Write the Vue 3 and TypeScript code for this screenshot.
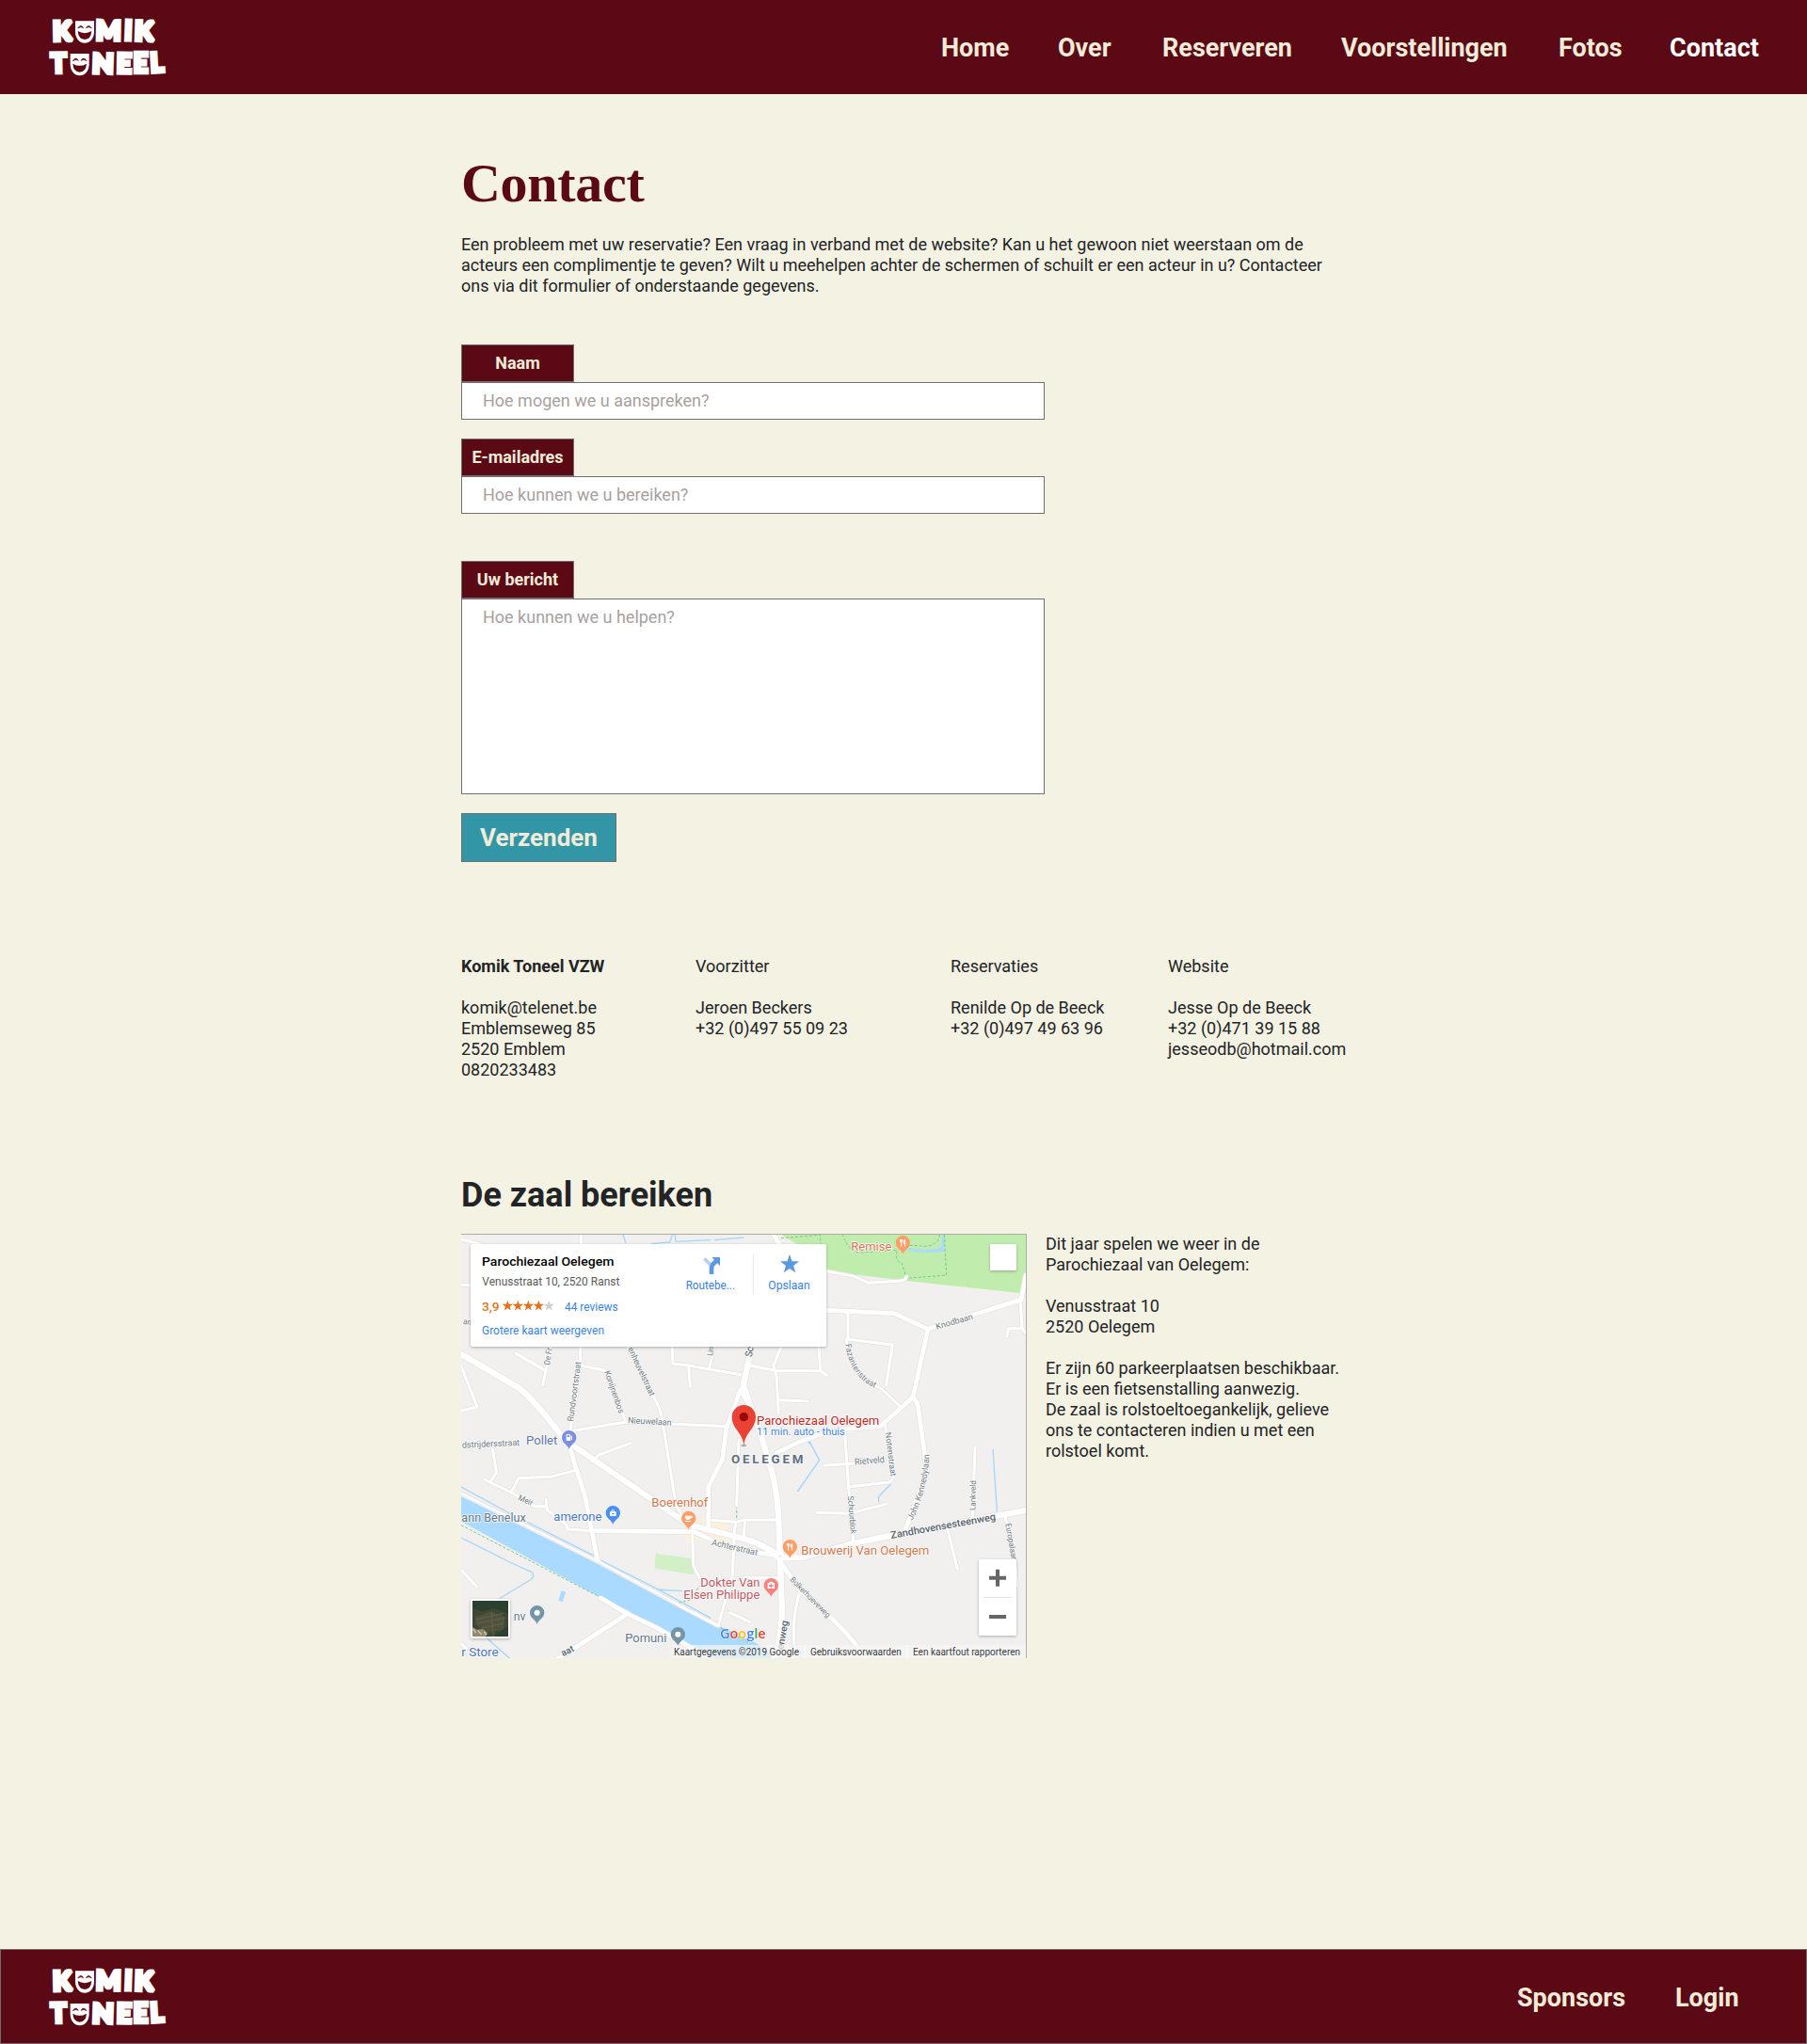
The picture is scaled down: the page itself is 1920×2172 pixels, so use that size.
<script setup lang="ts">
import { h } from 'vue'

interface NavItem { label: string; width: number; active?: boolean }
interface Contact { title: string; strong?: boolean; width: number; lines: string[] }
interface Label { t: string; a: [number, number]; b: [number, number]; s: number; c?: string; w?: number }
interface Pin { x: number; y: number; c: string; icon: string }

const nav: NavItem[] = [
  { label: 'Home', width: 124 },
  { label: 'Over', width: 111 },
  { label: 'Reserveren', width: 190 },
  { label: 'Voorstellingen', width: 231 },
  { label: 'Fotos', width: 118 },
  { label: 'Contact', width: 146, active: true },
]
const footerNav: NavItem[] = [
  { label: 'Sponsors', width: 168 },
  { label: 'Login', width: 139 },
]
const contacts: Contact[] = [
  { title: 'Komik Toneel VZW', strong: true, width: 249, lines: ['komik@telenet.be', 'Emblemseweg 85', '2520 Emblem', '0820233483'] },
  { title: 'Voorzitter', width: 271, lines: ['Jeroen Beckers', '+32 (0)497 55 09 23'] },
  { title: 'Reservaties', width: 231, lines: ['Renilde Op de Beeck', '+32 (0)497 49 63 96'] },
  { title: 'Website', width: 200, lines: ['Jesse Op de Beeck', '+32 (0)471 39 15 88', 'jesseodb@hotmail.com'] },
]

const logoLetters = [
  { t: 'K', x: 164, y: 136, w: 70, r: -1 },
  { t: 'M', x: 300, y: 133, w: 90, r: 1 },
  { t: 'I', x: 391, y: 133, w: 34, r: 2 },
  { t: 'K', x: 423, y: 134, w: 70, r: 2 },
  { t: 'T', x: 158, y: 238, w: 59, r: -1 },
  { t: 'N', x: 288, y: 238, w: 78, r: 2 },
  { t: 'E', x: 366, y: 238, w: 57, r: 1 },
  { t: 'E', x: 420, y: 238, w: 56, r: 0 },
  { t: 'L', x: 476, y: 236, w: 52, r: -3 },
]
const masks = [{ x: 270, y: 67 }, { x: 254, y: 171 }]

/* Wordmark with a laughing mask in place of each letter O. */
const KomikLogo = () =>
  h('svg', { viewBox: '0 0 720 300', width: 240, height: 100, role: 'img', 'aria-label': 'Komik Toneel' }, [
    ...logoLetters.map((l) =>
      h('text', {
        transform: `translate(${l.x + 5} ${l.y - 6}) rotate(${l.r})`,
        textLength: l.w - 10,
        lengthAdjust: 'spacingAndGlyphs',
        'font-family': 'Lato, sans-serif',
        'font-weight': 900,
        'font-size': 85,
        fill: '#fff',
        stroke: '#fff',
        'stroke-width': 13,
        'stroke-miterlimit': 2,
      }, l.t)),
    ...masks.map((m) =>
      h('g', { transform: `translate(${m.x} ${m.y})` }, [
        h('path', { d: 'M-30 0H30V34C30 56 16 70 0 70S-30 56 -30 34Z', fill: '#fff' }),
        h('path', { d: 'M-22 23Q-13 8 -4 22Q-13 16 -22 23ZM22 23Q13 8 4 22Q13 16 22 23Z', fill: '#5b0a15', stroke: '#5b0a15', 'stroke-width': 2 }),
        h('path', { d: 'M-22 32Q0 45 22 32Q20 58 0 59Q-20 58 -22 32Z', fill: '#5b0a15' }),
      ])),
  ])

const minorRoads: string[] = [
  'M15 36L80 52', 'M397 18V60', 'M15 180L45 183',
  'M15 440L66 570L15 582',
  'M190 400L285 455', 'M302 380L275 500',
  'M395 380V440L362 650', 'M395 438L470 453L530 592L540 618',
  'M365 647L540 618L865 632',
  'M545 378L630 540Q650 575 655 605L700 885L735 940',
  'M688 378L690 432L740 438L745 505', 'M740 438L805 450L905 467', 'M822 378L805 450',
  'M1035 378L1010 440L1020 470L1027 590', 'M1027 548L1120 552',
  'M925 435L1020 455H1160L1182 470', 'M1155 378L1160 455',
  'M1180 137L1265 153L1315 175L1415 168Q1432 166 1435 155',
  'M1248 262V355L1390 372L1370 500', 'M1243 355Q1250 470 1355 512L1415 570',
  'M1365 620L1395 793Q1390 803 1380 810L1250 825',
  'M1237 640L1250 825L1265 1000',
  'M1173 757L1265 750L1365 740', 'M1148 907L1250 910L1370 880',
  'M1653 700L1645 925', 'M1750 925L1780 1055L1787 1140', 'M1565 960L1597 1087',
  'M1095 1155Q1065 1250 1080 1380',
  'M900 675L893 885', 'M893 937L920 930H1022', 'M920 932L915 990', 'M915 1115H1030',
  'M803 930L890 937L886 970', 'M885 990L880 1105L835 1265', 'M870 1225L935 1255',
  'M15 1090L65 1143', 'M15 1325L30 1340',
  'M115 705L128 780L110 805', 'M90 802L175 843L250 887H285', 'M175 843L198 797L300 793L375 773',
  'M285 865L290 900L350 945L355 960L430 965',
  'M435 745L450 725L555 685',
  'M752 975L755 1075L775 1115',
  'M1803 320H1760L1755 345', 'M1797 225L1803 320L1815 335',
]
const mediumRoads: string[] = [
  'M1180 262L1395 272L1503 322L1800 228L1815 150',
  'M1503 322L1455 540L1350 632L1245 640Q1160 650 1075 690L1020 717',
  'M1455 540Q1470 550 1473 580L1500 775L1430 965',
  'M930 560L905 515L860 640L848 735L803 825V955',
  'M362 705L410 855L450 1060',
  'M430 965L740 968', 'M750 965L870 1020L1030 1045',
  'M1030 1060L1095 1155Q1240 1270 1310 1380',
  'M460 1180L545 1230L640 1275L820 1380',
  'M320 1375L545 1230', 'M1010 18L1035 60',
]
const mainRoads: string[] = [
  'M15 402L200 510Q250 550 345 675L740 945L915 990Q980 1010 1030 1045',
  'M940 378L915 500Q935 570 965 640L1010 795Q1025 860 1028 950L1037 1200Q1040 1300 1010 1380',
  'M1030 1050H1105L1265 1005L1385 980L1815 900',
]
const streams: string[] = [
  'M530 18L540 48', 'M620 50L680 45L688 20', 'M695 18L700 43L810 38', 'M822 38L915 30',
  'M15 825L180 915', 'M225 937L440 1045', 'M462 1060L640 1150L810 1243', 'M640 1152L720 1157',
  'M15 987L170 1065L240 1097Q252 1110 235 1122L135 1182', 'M100 1310L170 1372',
  'M1125 680L1157 740L1087 840', 'M1385 815L1345 857L1347 875', 'M1710 705L1723 905', 'M1120 680L1128 690',
]
const streetLabels: Label[] = [
  { t: 'Knodbaan', a: [1531, 323], b: [1648, 290], s: 27 },
  { t: 'Rundvoortstraat', a: [372, 617], b: [397, 427], s: 27 },
  { t: 'Konijnenbos', a: [471, 458], b: [518, 592], s: 27 },
  { t: 'enheuvelstraat', a: [546, 385], b: [617, 537], s: 27 },
  { t: 'De Fr', a: [297, 437], b: [305, 383], s: 27 },
  { t: 'Nieuwelaan', a: [546, 622], b: [685, 629], s: 28 },
  { t: 'Lin', a: [816, 408], b: [821, 380], s: 27 },
  { t: 'Sc', a: [941, 412], b: [947, 380], s: 32, c: '#4b5560' },
  { t: 'an', a: [20, 305], b: [46, 310], s: 26 },
  { t: 'dstrijdersstraat', a: [18, 701], b: [202, 693], s: 28 },
  { t: 'Meir', a: [195, 866], b: [239, 885], s: 26 },
  { t: 'Achterstraat', a: [812, 1010], b: [958, 1044], s: 28 },
  { t: 'Rietveld', a: [1270, 755], b: [1365, 747], s: 29 },
  { t: 'Notenstraat', a: [1367, 652], b: [1384, 792], s: 26 },
  { t: 'Schuurblok', a: [1247, 855], b: [1257, 975], s: 26 },
  { t: 'Lankveld', a: [1654, 900], b: [1656, 805], s: 26 },
  { t: 'Europalaan', a: [1750, 943], b: [1770, 1062], s: 26 },
  { t: 'Zandhovensesteenweg', a: [1386, 990], b: [1720, 930], s: 32, c: '#56626d', w: 500 },
  { t: 'Bolkerhoeveweg', a: [1062, 1122], b: [1182, 1243], s: 25 },
  { t: 'enweg', a: [1042, 1345], b: [1057, 1253], s: 30, c: '#56626d', w: 500 },
  { t: 'aat', a: [340, 1366], b: [377, 1347], s: 30, c: '#56626d', w: 500 },
]
const places: Label[] = [
  { t: 'Remise', a: [1258, 72], b: [1387, 72], s: 40, c: '#d5794c' },
  { t: 'Pollet', a: [222, 691], b: [322, 691], s: 40, c: '#5f76ae' },
  { t: 'amerone', a: [310, 932], b: [463, 932], s: 40, c: '#4a78bd' },
  { t: 'ann Benelux', a: [16, 936], b: [221, 936], s: 40, c: '#62778a' },
  { t: 'nv', a: [182, 1250], b: [220, 1250], s: 40, c: '#62778a' },
  { t: 'Pomuni', a: [538, 1319], b: [670, 1319], s: 40, c: '#62778a' },
  { t: 'r Store', a: [16, 1366], b: [134, 1366], s: 40, c: '#4a78bd' },
  { t: 'Boerenhof', a: [622, 887], b: [802, 887], s: 40, c: '#d5794c' },
  { t: 'Dokter Van', a: [778, 1142], b: [967, 1142], s: 40, c: '#c05a62' },
  { t: 'Elsen Philippe', a: [724, 1181], b: [967, 1181], s: 40, c: '#c05a62' },
  { t: 'Brouwerij Van Oelegem', a: [1099, 1041], b: [1507, 1041], s: 40, c: '#d5794c' },
  { t: 'OELEGEM', a: [876, 750], b: [1105, 750], s: 40, c: '#5d6f80', w: 700 },
  { t: 'Parochiezaal Oelegem', a: [957, 627], b: [1348, 627], s: 41, c: '#c5261f' },
  { t: '11 min. auto - thuis', a: [957, 660], b: [1238, 660], s: 32, c: '#4285dd' },
]
const pins: Pin[] = [
  { x: 1423, y: 47, c: '#ff9e67', icon: 'food' },
  { x: 359, y: 668, c: '#7f8fe0', icon: 'fuel' },
  { x: 499, y: 908, c: '#4a90f0', icon: 'bag' },
  { x: 740, y: 925, c: '#ff9e67', icon: 'cup' },
  { x: 1063, y: 1016, c: '#ff9e67', icon: 'food' },
  { x: 1003, y: 1139, c: '#f88181', icon: 'med' },
  { x: 257, y: 1226, c: '#7495a8', icon: 'dot' },
  { x: 706, y: 1295, c: '#7495a8', icon: 'dot' },
]
const len = (l: Label): number => Math.hypot(l.b[0] - l.a[0], l.b[1] - l.a[1])
const place = (l: Label): string =>
  `translate(${l.a[0]} ${l.a[1]}) rotate(${(Math.atan2(l.b[1] - l.a[1], l.b[0] - l.a[0]) * 180) / Math.PI})`
const star = (cx: number, cy: number, r: number): string =>
  Array.from({ length: 10 }, (_, i) => {
    const a = (Math.PI / 5) * i - Math.PI / 2
    const q = i % 2 ? r * 0.4 : r
    return `${(cx + q * Math.cos(a)).toFixed(1)},${(cy + q * Math.sin(a)).toFixed(1)}`
  }).join(' ')
</script>

<template>
  <div class="page">
    <header class="bar">
      <KomikLogo />
      <nav class="links">
        <a v-for="n in nav" :key="n.label" :class="{ active: n.active }" :style="{ width: n.width + 'px' }">{{ n.label }}</a>
      </nav>
    </header>

    <main class="content">
      <h1>Contact</h1>
      <p class="intro">Een probleem met uw reservatie? Een vraag in verband met de website? Kan u het gewoon niet weerstaan om de<br />acteurs een complimentje te geven? Wilt u meehelpen achter de schermen of schuilt er een acteur in u? Contacteer<br />ons via dit formulier of onderstaande gegevens.</p>

      <form class="form" @submit.prevent>
        <div class="field"><label>Naam</label><div class="input">Hoe mogen we u aanspreken?</div></div>
        <div class="field"><label>E-mailadres</label><div class="input">Hoe kunnen we u bereiken?</div></div>
        <div class="field message"><label>Uw bericht</label><div class="input area">Hoe kunnen we u helpen?</div></div>
        <button type="submit">Verzenden</button>
      </form>

      <section class="contacts">
        <div v-for="c in contacts" :key="c.title" :style="{ width: c.width + 'px' }">
          <div class="title" :class="{ strong: c.strong }">{{ c.title }}</div>
          <div v-for="l in c.lines" :key="l">{{ l }}</div>
        </div>
      </section>

      <h2>De zaal bereiken</h2>
      <section class="venue">
        <svg class="map" viewBox="15 18 1803 1353">
          <rect x="15" y="18" width="1803" height="1353" fill="#f1f0ef" />
          <path d="M1030 18H1818V150L1797 207L1435 168L1180 137L1100 60Z" fill="#c0ecae" />
          <path d="M632 1085L635 1037L750 1053L757 1105Z" fill="#d3efc8" />
          <path d="M715 970L745 925L865 938L872 1010L760 990L740 1000Z" fill="#fdf1dc" />
          <path d="M15 855L190 940L450 1070L830 1265L960 1325L1030 1380H790L550 1220L455 1175L15 935Z" fill="#aadaff" />
          <path d="M335 1155L348 1160L338 1192L325 1187Z" fill="#aadaff" />
          <path d="M1440 62Q1500 75 1545 62L1550 20L1557 20L1555 75Q1500 82 1440 72Z" fill="#aadaff" />
          <g class="streams"><path v-for="d in streams" :key="d" :d="d" /></g>
          <g class="dashes">
            <path d="M15 947L455 1175M1035 32L1160 22V90M1230 18Q1250 80 1290 78L1405 70Q1395 105 1420 112L1435 160L1562 150L1555 18M1445 55L1500 58Q1540 50 1540 18M708 1195L745 1185L775 1140M893 885V937M1245 750L1250 825M710 1205L930 1320" />
          </g>
          <g class="casing">
            <path v-for="d in minorRoads" :key="d" :d="d" stroke-width="13" />
            <path v-for="d in mediumRoads" :key="d" :d="d" stroke-width="18" />
            <path v-for="d in mainRoads" :key="d" :d="d" stroke-width="23" />
            <path d="M15 847L450 1063L710 1203L835 1268" stroke-width="15" />
          </g>
          <g class="roads">
            <path v-for="d in minorRoads" :key="d" :d="d" stroke-width="9" />
            <path v-for="d in mediumRoads" :key="d" :d="d" stroke-width="14" />
            <path v-for="d in mainRoads" :key="d" :d="d" stroke-width="19" />
            <path d="M15 847L450 1063L710 1203L835 1268" stroke-width="10" />
            <circle cx="1030" cy="1046" r="16" fill="#fff" />
          </g>
          <circle cx="1031" cy="1046" r="3" fill="#ddd" />
          <path d="M15 850L450 1066L710 1206" fill="none" stroke="#e2e2e2" stroke-width="2" />

          <g class="labels">
            <text v-for="l in streetLabels" :key="l.t" :transform="place(l)" :font-size="l.s" :fill="l.c || '#707b83'" :font-weight="l.w || 400" :textLength="len(l)" lengthAdjust="spacingAndGlyphs">{{ l.t }}</text>
            <path id="faz" d="M1240 370Q1255 480 1342 513" fill="none" stroke="none" />
            <text font-size="26" fill="#707b83"><textPath href="#faz" textLength="176">Fazantenstraat</textPath></text>
            <path id="jk" d="M1453 933Q1505 830 1508 708" fill="none" stroke="none" />
            <text font-size="27" fill="#707b83"><textPath href="#jk" textLength="220">John Kennedylaan</textPath></text>
            <text v-for="l in places" :key="l.t" :transform="place(l)" :font-size="l.s" :fill="l.c" :font-weight="l.w || 400" :textLength="len(l)" :lengthAdjust="l.t === 'OELEGEM' ? 'spacing' : 'spacingAndGlyphs'">{{ l.t }}</text>
          </g>

          <g v-for="p in pins" :key="p.x" :transform="`translate(${p.x} ${p.y})`">
            <path d="M0 37C-3 22 -23 18 -23 0A23 23 0 0 1 23 0C23 18 3 22 0 37Z" :fill="p.c" />
            <circle v-if="p.icon === 'dot'" r="9" fill="#fff" />
            <path v-else-if="p.icon === 'food'" d="M-9 -11V-4M-5 -11V-4M-1 -11V-4M-9 -4H-1M-5 -4V12M7 12V-10Q2 -7 3 2H7" fill="none" stroke="#fff" stroke-width="3" />
            <path v-else-if="p.icon === 'cup'" d="M-11 -8H12V0H6Q5 5 0 5H-5Q-11 4 -11 -2ZM-11 8H7V11H-11ZM7 -5V-3H9V-5Z" fill="#fff" fill-rule="evenodd" />
            <path v-else-if="p.icon === 'bag'" d="M-10 -4H10V10H-10ZM-5 -4V-7Q0 -15 5 -7V-4H2V-7Q0 -10 -2 -7V-4ZM-5 1Q0 8 5 1Z" fill="#fff" fill-rule="evenodd" />
            <path v-else-if="p.icon === 'fuel'" d="M-9 -11H4V10H-9ZM-6 -8V-2H1V-8ZM6 -8L10 -4V8H6Z" fill="#fff" fill-rule="evenodd" />
            <path v-else d="M-11 -8H-5V-12H5V-8H11V10H-11ZM-2 -6V-1H-7V3H-2V8H2V3H7V-1H2V-6Z" fill="#fff" fill-rule="evenodd" />
          </g>
          <ellipse cx="916" cy="693" rx="9" ry="4" fill="#b9a9a7" />
          <path d="M916 693C912 650 878 640 878 602A38 38 0 0 1 954 602C954 640 920 650 916 693Z" fill="#ea4335" />
          <circle cx="916" cy="602" r="14" fill="#960a0a" />

          <text class="google" x="840" y="1309" textLength="146" lengthAdjust="spacingAndGlyphs"><tspan fill="#4285f4">G</tspan><tspan fill="#ea4335">o</tspan><tspan fill="#fbbc05">o</tspan><tspan fill="#4285f4">g</tspan><tspan fill="#34a853">l</tspan><tspan fill="#ea4335">e</tspan></text>
          <rect x="680" y="1329" width="1138" height="42" fill="#f5f5f5" opacity=".72" />
          <path d="M1112 1329V1371M1437 1329V1371" stroke="#fff" stroke-width="3" opacity=".7" />
          <g class="legal">
            <text x="693" y="1361" textLength="399" lengthAdjust="spacingAndGlyphs">Kaartgegevens ©2019 Google</text>
            <text x="1128" y="1361" textLength="290" lengthAdjust="spacingAndGlyphs">Gebruiksvoorwaarden</text>
            <text x="1455" y="1361" textLength="342" lengthAdjust="spacingAndGlyphs">Een kaartfout rapporteren</text>
          </g>

          <g class="shadow">
            <rect x="45" y="51" width="1134" height="327" rx="5" fill="#fff" />
            <rect x="1701" y="51" width="84" height="84" rx="4" fill="#fff" />
            <rect x="1665" y="1056" width="120" height="243" rx="4" fill="#fff" />
            <rect x="45" y="1182" width="126" height="126" rx="6" fill="#fff" />
          </g>
          <g class="card">
            <text x="81" y="119" font-size="41" font-weight="500" fill="#000" textLength="421" lengthAdjust="spacingAndGlyphs">Parochiezaal Oelegem</text>
            <text x="82" y="183" fill="#5b5b5b" textLength="438" lengthAdjust="spacingAndGlyphs">Venusstraat 10, 2520 Ranst</text>
            <text x="81" y="263" font-size="40" font-weight="500" fill="#e7711b" textLength="56" lengthAdjust="spacingAndGlyphs">3,9</text>
            <polygon v-for="i in 5" :key="i" :points="star(130 + i * 33, 248, 18)" :fill="i < 5 ? '#e7711b' : '#d0d0d0'" />
            <text x="345" y="263" textLength="170" lengthAdjust="spacingAndGlyphs">44 reviews</text>
            <text x="81" y="338" textLength="390" lengthAdjust="spacingAndGlyphs">Grotere kaart weergeven</text>
            <text x="731" y="195" textLength="157" lengthAdjust="spacingAndGlyphs">Routebe...</text>
            <text x="994" y="195" textLength="133" lengthAdjust="spacingAndGlyphs">Opslaan</text>
            <path d="M790 97L813 121" stroke="#b4d0f4" stroke-width="11" />
            <path d="M813 147V127Q813 120 818 115L831 102" fill="none" stroke="#5c98e2" stroke-width="14" />
            <path d="M814 93H840V120Z" fill="#5c98e2" />
            <path d="M946 82V212" stroke="#e8e8e8" stroke-width="3" />
            <polygon :points="star(1062, 116, 32)" fill="#5c98e2" />
          </g>
          <path d="M1725 1088V1142M1698 1115H1752M1698 1239H1752" stroke="#666" stroke-width="12" />
          <path d="M1680 1177H1770" stroke="#e1e1e1" stroke-width="3" />
          <rect x="51" y="1188" width="114" height="114" fill="#3d4733" />
          <path d="M51 1188H165V1230L120 1212L80 1222L51 1210ZM120 1302L165 1270V1302Z" fill="#2a4030" />
          <path d="M60 1240L110 1222L155 1240L150 1280L100 1290L62 1265Z" fill="#50523b" />
          <path d="M62 1248L150 1228M66 1260L154 1243M80 1275L150 1260M112 1225L118 1302" stroke="#62634a" stroke-width="3" />
          <path d="M51 1272L66 1280L84 1278L100 1291L92 1302H51Z" fill="#8e8a70" />
          <path d="M53 1278L62 1290M68 1282L80 1296M88 1286L96 1298" stroke="#cfc8ac" stroke-width="4" />
          <path d="M15 19.5H1816.5V1371" fill="none" stroke="#adadad" stroke-width="3" />
        </svg>
        <p class="directions">Dit jaar spelen we weer in de<br />Parochiezaal van Oelegem:<br /><br />Venusstraat 10<br />2520 Oelegem<br /><br />Er zijn 60 parkeerplaatsen beschikbaar.<br />Er is een fietsenstalling aanwezig.<br />De zaal is rolstoeltoegankelijk, gelieve<br />ons te contacteren indien u met een<br />rolstoel komt.</p>
      </section>
    </main>

    <footer class="bar footer">
      <KomikLogo />
      <nav class="links">
        <a v-for="n in footerNav" :key="n.label" :style="{ width: n.width + 'px' }">{{ n.label }}</a>
      </nav>
    </footer>
  </div>
</template>

<style>
body { background: #f4f2e3; }
</style>

<style scoped>
.page { width: 1920px; height: 2172px; display: flex; flex-direction: column; background: #f4f2e3; font: 18px/22px Roboto, sans-serif; color: #222426; }
.bar { box-sizing: border-box; height: 100px; flex: none; display: flex; justify-content: space-between; align-items: flex-start; background: #5b0a15; }
.links { display: flex; padding-top: 34px; font-size: 27px; font-weight: 700; line-height: 34px; }
.links a { color: #f1ecd9; white-space: nowrap; }
.links a.active { color: #fff; }
.footer { height: 101px; border: 1px solid #6f6f6f; margin-top: auto; }
.footer svg { margin-left: -1px; }
.content { padding-left: 490px; display: flex; flex-direction: column; align-items: flex-start; }
h1 { margin: 61px 0 0; font: 700 58px/68px "Liberation Serif", serif; letter-spacing: -.3px; color: #5b0a15; }
.intro { margin: 20px 0 0; white-space: nowrap; }
.form { margin-top: 51px; width: 620px; }
.field { margin-bottom: 20px; }
.message { margin-top: 50px; }
label { display: block; box-sizing: border-box; width: 120px; height: 40px; border: 1px solid #707070; background: #5b0a15; color: #f1ecd9; font-weight: 700; line-height: 38px; text-align: center; white-space: nowrap; }
.input { box-sizing: border-box; height: 40px; border: 1px solid #707070; background: #fff; color: #a99f9f; line-height: 38px; padding-left: 22px; }
.area { height: 208px; }
button { display: block; box-sizing: border-box; width: 165px; height: 52px; padding: 0; border: 1px solid #707070; background: #3396a6; color: #f1ecd9; font: 700 26px/48px Roboto, sans-serif; }
.contacts { display: flex; margin-top: 100px; height: 110px; white-space: nowrap; }
.title { margin-bottom: 22px; }
.strong { font-weight: 700; }
h2 { margin: 122px 0 0; font-size: 36px; line-height: 44px; font-weight: 700; }
.venue { display: flex; margin-top: 19px; gap: 20px; }
.map { width: 601px; height: 451px; flex: none; display: block; font-family: Roboto, sans-serif; }
.directions { margin: 0; white-space: nowrap; }
.streams path { fill: none; stroke: #a5d6fb; stroke-width: 4px; }
.dashes path { fill: none; stroke: #7cc98a; stroke-width: 3px; stroke-dasharray: 9 6; }
.casing path { fill: none; stroke: #e3e2e1; stroke-linecap: round; stroke-linejoin: round; }
.roads path { fill: none; stroke: #fff; stroke-linecap: round; stroke-linejoin: round; }
.labels text { paint-order: stroke; stroke: #fafafa; stroke-width: 5px; stroke-linejoin: round; }
.google { font: 600 42px "Open Sans", sans-serif; paint-order: stroke; stroke: #fff; stroke-width: 3px; }
.legal { font-size: 30px; fill: #3c3c3c; }
.card { font-size: 37px; fill: #3b82dd; }
.shadow { filter: drop-shadow(0 3px 4px rgba(0, 0, 0, .28)); }
</style>
